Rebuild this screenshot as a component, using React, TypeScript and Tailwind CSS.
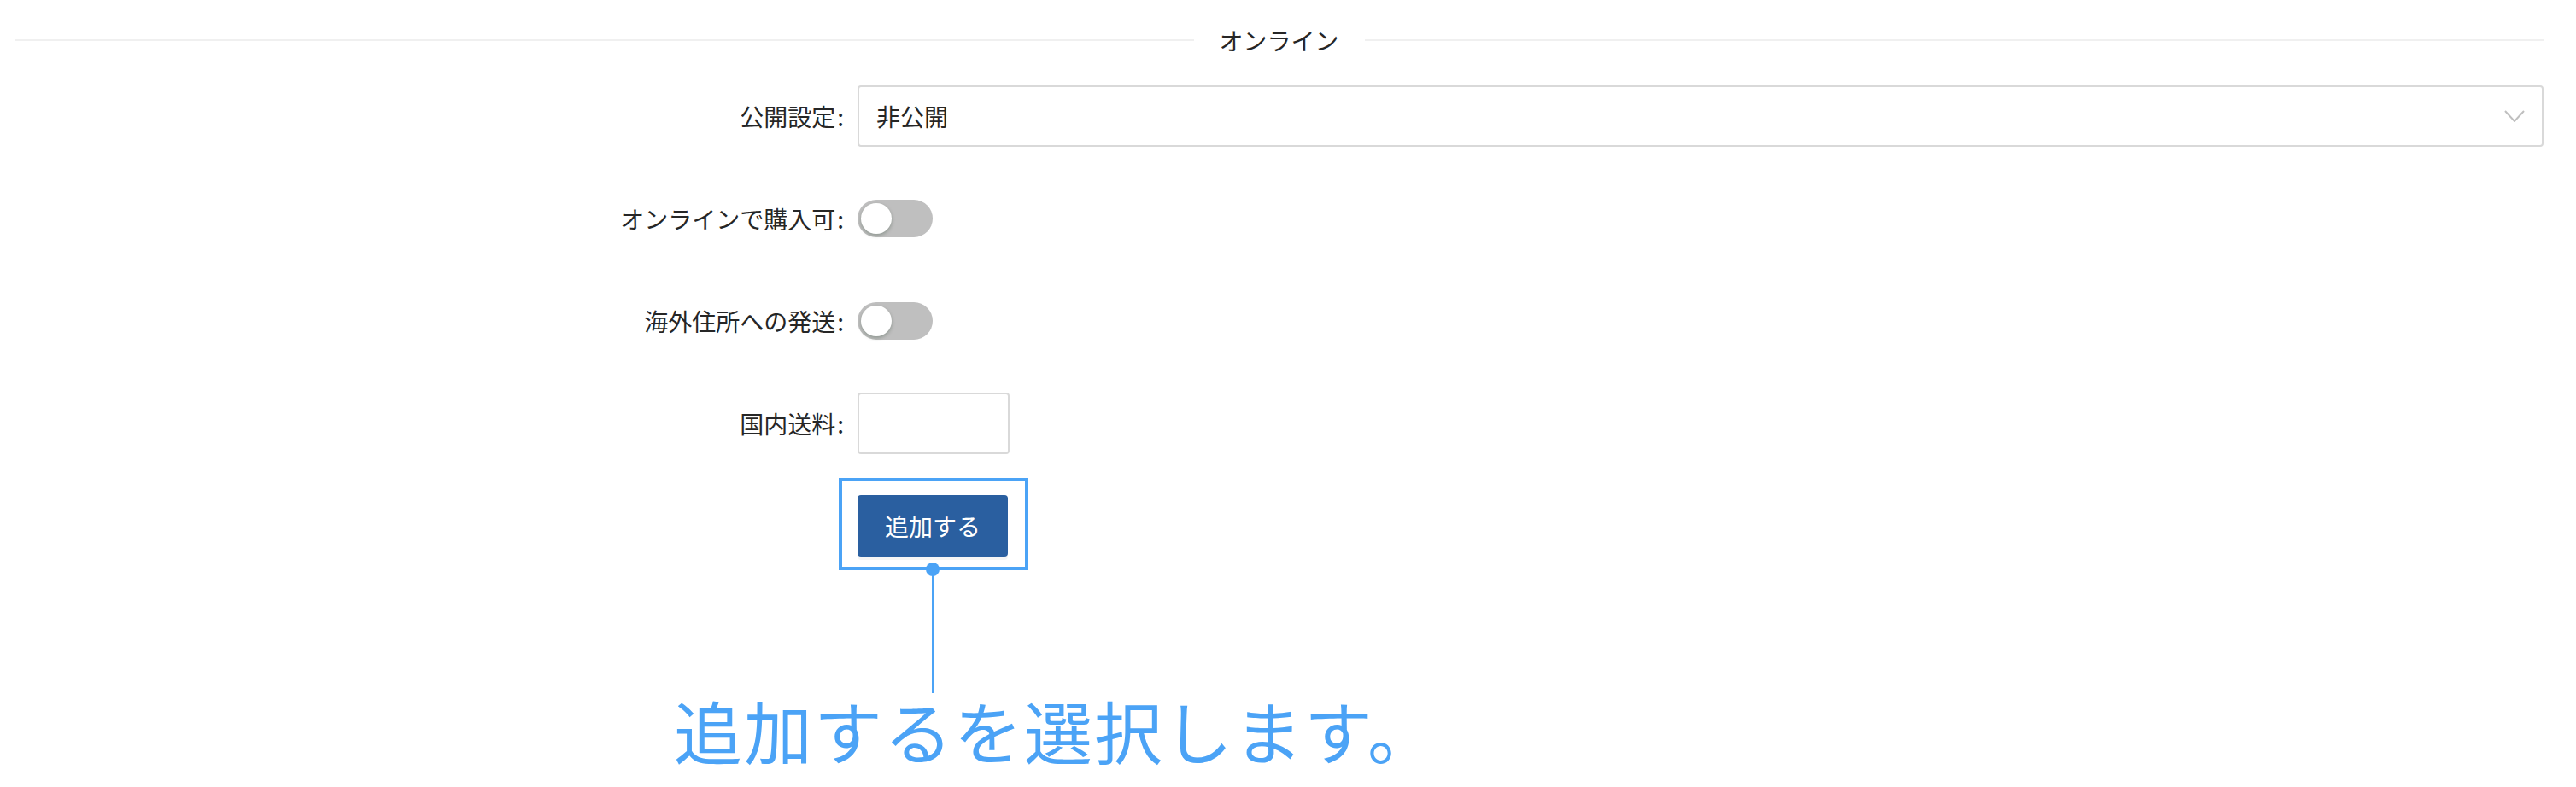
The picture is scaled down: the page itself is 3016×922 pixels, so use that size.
import React from 'react';

const FONT = "font-['Noto_Sans_CJK_JP','Noto_Sans',sans-serif]";

function Label({ text }: { text: string }) {
  return (
    <div className="w-1/3 flex justify-end items-center text-[28px] text-[#262626]">
      <span>{text}</span>
      <span className="ml-[2px] mr-[16px]">:</span>
    </div>
  );
}

function Toggle() {
  return (
    <div className="w-[88px] h-[44px] rounded-full bg-[#bfbfbf] flex items-center pl-[4px]">
      <div className="w-[36px] h-[36px] rounded-full bg-white shadow-[0_2px_4px_rgba(0,35,11,0.25)]" />
    </div>
  );
}

export default function App() {
  return (
    <div className={`min-h-[922px] bg-white pl-[17px] pr-[38px] pt-[25px] ${FONT}`}>
      {/* divider */}
      <div className="flex items-center h-[44px] mb-[31px]">
        <div className="flex-1 h-[2px] bg-[#f0f0f0]" />
        <span className="px-[30px] text-[28px] text-[#262626] leading-[44px]">オンライン</span>
        <div className="flex-1 h-[2px] bg-[#f0f0f0]" />
      </div>

      <div className="flex flex-col gap-[48px]">
        <div className="flex items-center h-[72px]">
          <Label text="公開設定" />
          <div className="flex-1 h-[72px] border-2 border-[#d9d9d9] rounded-[4px] flex items-center justify-between pl-[20px] pr-[20px]">
            <span className="text-[28px] text-[#262626]">非公開</span>
            <svg width="24" height="14" viewBox="0 0 24 14" fill="none">
              <path d="M1 1 L12 13 L23 1" stroke="#bfbfbf" strokeWidth="2" />
            </svg>
          </div>
        </div>

        <div className="flex items-center h-[72px]">
          <Label text="オンラインで購入可" />
          <Toggle />
        </div>

        <div className="flex items-center h-[72px]">
          <Label text="海外住所への発送" />
          <Toggle />
        </div>

        <div className="flex items-center h-[72px]">
          <Label text="国内送料" />
          <div className="w-[178px] h-[72px] border-2 border-[#d9d9d9] rounded-[4px]" />
        </div>

        <div className="flex items-center h-[72px]">
          <div className="w-1/3" />
          <div className="relative">
            <button className="w-[176px] h-[72px] bg-[#2a5fa0] rounded-[4px] text-white text-[28px] shadow-[0_4px_0_rgba(0,0,0,0.04)]">
              追加する
            </button>
            {/* annotation */}
            <div className="absolute left-[-22px] top-[-20px] w-[222px] h-[108px] border-4 border-[#4ba3f6]" />
            <div className="absolute left-[80px] top-[79px] w-[16px] h-[16px] rounded-full bg-[#4ba3f6]" />
            <div className="absolute left-[87px] top-[88px] w-[3px] h-[144px] bg-[#4ba3f6]" />
            <div className="absolute left-[-215px] top-[234px] whitespace-nowrap text-[80px] leading-none tracking-[2px] text-[#4ba3f6]">
              追加するを選択します。
            </div>
          </div>
        </div>
      </div>
    </div>
  );
}
